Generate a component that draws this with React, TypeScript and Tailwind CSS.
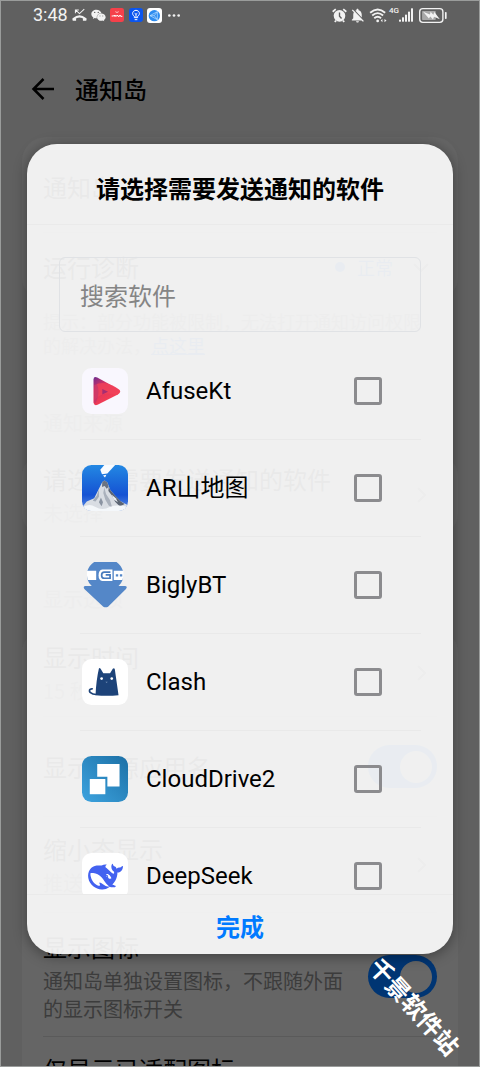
import { useState, type ReactNode } from 'react'
import { FaWeixin } from 'react-icons/fa'
import { MdNotificationsOff } from 'react-icons/md'

type AppEntry = {
  name: string
  icon: ReactNode
}

const apps: AppEntry[] = [
  { name: 'AfuseKt', icon: <AfuseIcon /> },
  { name: 'AR山地图', icon: <MountainIcon /> },
  { name: 'BiglyBT', icon: <BiglyIcon /> },
  { name: 'Clash', icon: <ClashIcon /> },
  { name: 'CloudDrive2', icon: <CloudDriveIcon /> },
  { name: 'DeepSeek', icon: <DeepSeekIcon /> },
]

export default function App() {
  return (
    <div className="relative h-screen overflow-hidden border border-[#9a9c9b] bg-[#606060] font-['Noto_Sans_CJK_SC',sans-serif] text-black">
      <StatusBar />
      <SettingsPage />
      <AppPickerDialog />
      <div className="absolute right-1 bottom-12 rotate-48 text-2xl leading-6 font-bold text-white">
        千景软件站
      </div>
    </div>
  )
}

const StatusBar = () => {
  return (
    <div className="flex h-7 items-center justify-between pr-8 pl-8 text-[#f2f2f2]">
      <div className="flex items-center gap-1">
        <span className="font-['Roboto',sans-serif] text-lg">3:48</span>
        <MissedCallIcon />
        <FaWeixin size={15} />
        <svg viewBox="0 0 42 42" className="h-3.5 w-3.5">
          <rect width="42" height="42" rx="7" fill="#f5404a" />
          <path d="M16 11q5 5 10 0" stroke="#fff" strokeWidth="2" fill="none" />
          <path
            d="M5 24h6l2-3 2 5 2-4 2 3 3-4 2 4h4l2-4 2 4h5"
            stroke="#fff"
            strokeWidth="3"
            fill="none"
          />
        </svg>
        <svg viewBox="0 0 42 42" className="ml-px h-3.5 w-3.5">
          <rect width="42" height="42" rx="9" fill="#0a55f0" />
          <path
            d="M16 29v-4c-10-7-4-18 5-18s15 11 5 18v4zM17 35h8M21 28v-9l-4-3M21 19l4-3"
            stroke="#fff"
            strokeWidth="3"
            fill="none"
          />
        </svg>
        <svg viewBox="0 0 45 45" className="h-[15px] w-[15px]">
          <rect width="45" height="45" rx="9" fill="#fff" />
          <circle cx="22" cy="23" r="17" fill="#2d8cf0" />
          <path
            d="M9 23 31 11v24zM31 11 22 23l9 12M9 23h13"
            stroke="#c4e4ff"
            strokeWidth="2"
            fill="none"
          />
        </svg>
        <svg viewBox="0 0 36 8" className="ml-0.5 h-[3px] w-3" fill="currentColor">
          <circle cx="4" cy="4" r="4" />
          <circle cx="18" cy="4" r="4" />
          <circle cx="32" cy="4" r="4" />
        </svg>
      </div>
      <div className="flex items-center gap-0.5">
        <svg viewBox="0 0 44 44" className="h-[15px] w-[15px]">
          <circle cx="22" cy="23" r="17" fill="currentColor" />
          <path d="M2 11 11 3M42 11 33 3M8 41l4-4M36 41l-4-4" stroke="currentColor" strokeWidth="5" />
          <path d="M22 13v11l6 7" stroke="#606060" strokeWidth="4" fill="none" />
        </svg>
        <MdNotificationsOff size={17} />
        <svg viewBox="0 0 52 44" className="ml-px h-[15px] w-[18px]" fill="none">
          <path
            d="M3 14q22-19 44 0M9 22q16-14 32 0M15 30q10-9 20 0"
            stroke="currentColor"
            strokeWidth="5.500"
          />
          <circle cx="25" cy="38" r="4" fill="currentColor" />
          <path d="m34 37 5-5v10zM51 37l-6-5v10z" fill="currentColor" />
        </svg>
        <span className="mb-2 font-['Roboto',sans-serif] text-[8px] leading-none font-medium">4G</span>
        <svg viewBox="0 0 42 40" className="-ml-0.5 h-[14px] w-[14px]" fill="currentColor">
          <rect y="34" width="6" height="6" />
          <rect x="9" y="27" width="6" height="13" />
          <rect x="18" y="19" width="6" height="21" />
          <rect x="27" y="10" width="6" height="30" />
          <rect x="36" width="6" height="40" />
        </svg>
        <svg viewBox="0 0 82 44" className="ml-1 h-[15px] w-7">
          <rect x="2" y="2" width="68" height="40" rx="9" fill="none" stroke="currentColor" strokeWidth="4" />
          <rect x="9" y="9" width="40" height="26" rx="2" fill="#a8a8a8" />
          <path d="m12 11 20 8 2-8 8 9 3-8 16 21-17-7-3 8-8-9-4 6z" fill="currentColor" />
          <rect x="76" y="12" width="5" height="20" rx="2" fill="currentColor" />
        </svg>
      </div>
    </div>
  )
}

const MissedCallIcon = () => (
  <svg viewBox="0 0 44 40" className="h-3.5 w-[15px]" fill="none" stroke="currentColor">
    <path d="m10 5 12 11L36 3M10 15V5h10" strokeWidth="3" />
    <path d="M5 35v-4q17-14 34 0v4" strokeWidth="6" />
    <path d="M2 33h10M32 33h10" strokeWidth="7" />
  </svg>
)

const SettingsPage = () => {
  return (
    <main>
      <header className="mt-10 flex h-10 items-center gap-5 pl-[30px]">
        <button type="button" aria-label="返回">
          <svg
            viewBox="0 0 24 24"
            className="h-6 w-6"
            fill="none"
            stroke="currentColor"
            strokeWidth="2.5"
          >
            <path d="M23 12H3M12.500 2 2.500 12l10 10" />
          </svg>
        </button>
        <h1 className="text-2xl font-medium">通知岛</h1>
      </header>

      <Card className="mt-7">
        <SettingRow title="通知岛" className="min-h-24 pt-1" />
        <SettingRow title="运行诊断" className="min-h-17">
          <span className="flex items-center gap-3 text-lg text-[#003573]">
            <span className="h-2.5 w-2.5 rounded-full bg-[#003573]" />
            正常
            <Chevron className="ml-2 rotate-90" />
          </span>
        </SettingRow>
      </Card>
      <p className="mx-[42px] mt-2 text-lg leading-6 text-[#3c3c3c]">
        提示：部分功能被限制，无法打开通知访问权限的解决办法，
        <a href="#help" className="text-[#003573] underline">
          点这里
        </a>
      </p>

      <SectionTitle className="mt-13">通知来源</SectionTitle>
      <Card className="mt-4">
        <SettingRow title="请选择需要发送通知的软件" description="未选择" className="min-h-21">
          <Chevron />
        </SettingRow>
      </Card>

      <SectionTitle className="mt-12">显示选项</SectionTitle>
      <Card className="mt-4">
        <SettingRow title="显示时间" description="15 秒" className="min-h-22">
          <Chevron />
        </SettingRow>
        <SettingRow title="显示来源应用名" className="min-h-25">
          <Switch label="显示来源应用名" />
        </SettingRow>
        <SettingRow title="缩小态显示" description="推送图标" className="min-h-24">
          <Chevron />
        </SettingRow>
        <SettingRow
          title="显示图标"
          description="通知岛单独设置图标，不跟随外面的显示图标开关"
          className="min-h-31 pt-1"
        >
          <Switch label="显示图标" />
        </SettingRow>
        <SettingRow title="仅显示已适配图标" className="min-h-16" />
      </Card>
    </main>
  )
}

type BlockProps = {
  className?: string
  children?: ReactNode
}

const Card = ({ className = '', children }: BlockProps) => (
  <section
    className={`mx-[21px] divide-y divide-[#5a5a5a] rounded-3xl bg-[#656565] px-[21px] ${className}`}
  >
    {children}
  </section>
)

const SectionTitle = ({ className = '', children }: BlockProps) => (
  <h2 className={`mx-[42px] text-xl text-[#3c3c3c] ${className}`}>{children}</h2>
)

type SettingRowProps = BlockProps & {
  title: string
  description?: string
}

const SettingRow = ({ title, description, className = '', children }: SettingRowProps) => (
  <div className={`flex items-center justify-between gap-6 ${className}`}>
    <div>
      <h3 className="text-2xl">{title}</h3>
      {description && <p className="mt-1 text-xl text-[#3c3c3c]">{description}</p>}
    </div>
    {children}
  </div>
)

const Chevron = ({ className = '' }: { className?: string }) => (
  <svg
    viewBox="0 0 16 16"
    className={`mr-2 h-4 w-4 shrink-0 ${className}`}
    fill="none"
    stroke="#3c3c3c"
    strokeWidth="2"
  >
    <path d="m5 1 7 7-7 7" />
  </svg>
)

const Switch = ({ label }: { label: string }) => {
  const [enabled, setEnabled] = useState(true)

  return (
    <input
      type="checkbox"
      role="switch"
      aria-label={label}
      checked={enabled}
      onChange={(e) => setEnabled(e.target.checked)}
      className="flex h-[43px] w-[69px] shrink-0 appearance-none items-center rounded-full bg-[#4f4f4f] px-[5px] before:h-8 before:w-8 before:rounded-full before:bg-[#676767] checked:justify-end checked:bg-[#003573]"
    />
  )
}

const AppPickerDialog = () => {
  const [search, setSearch] = useState('')
  const [selected, setSelected] = useState<string[]>([])

  const visibleApps = apps.filter((app) => app.name.toLowerCase().includes(search.toLowerCase()))

  const toggleApp = (name: string) => {
    setSelected((prev) =>
      prev.includes(name) ? prev.filter((item) => item !== name) : [...prev, name]
    )
  }

  return (
    <div
      role="dialog"
      aria-labelledby="picker-title"
      className="absolute inset-x-[26px] top-[143px] bottom-28 flex flex-col overflow-hidden rounded-[30px] bg-[#fbfbfb]/93 shadow-[0_2px_14px_rgba(0,0,0,0.4)]"
    >
      <h2
        id="picker-title"
        className="border-b border-[#eaeaea] pt-7 pb-5 text-center text-2xl font-bold"
      >
        请选择需要发送通知的软件
      </h2>
      <input
        type="text"
        aria-label="搜索软件"
        placeholder="搜索软件"
        value={search}
        onChange={(e) => setSearch(e.target.value)}
        className="mx-8 mt-8 h-[75px] shrink-0 rounded-md border border-[#e0e2e5] px-5 text-2xl placeholder:text-[#858585]"
      />
      <ul className="mt-[11px] min-h-0 flex-1 divide-y divide-[#e9e9e9] overflow-y-auto pr-8 pl-[53px] [scrollbar-width:none]">
        {visibleApps.map((app) => (
          <li key={app.name}>
            <label className="flex h-24 items-center gap-[18px] pr-[39px] pl-0.5">
              {app.icon}
              <span className="flex-1 font-['Roboto','Noto_Sans_CJK_SC',sans-serif] text-2xl">
                {app.name}
              </span>
              <input
                type="checkbox"
                checked={selected.includes(app.name)}
                onChange={() => toggleApp(app.name)}
                className="h-7 w-7 appearance-none rounded-[3px] border-3 border-[#8b8b8e] checked:bg-[#007aff]"
              />
            </label>
          </li>
        ))}
      </ul>
      <button
        type="button"
        className="border-t border-[#eaeaea] pt-[15px] pb-3 text-2xl font-bold text-[#007aff]"
      >
        完成
      </button>
    </div>
  )
}

function AfuseIcon() {
  return (
    <svg viewBox="0 0 136 136" className="h-[46px] w-[46px]">
      <defs>
        <linearGradient id="afuse" x1="0" y1="0" x2="0.6" y2="1">
          <stop offset="0" stopColor="#6a2c91" />
          <stop offset="0.35" stopColor="#d83260" />
          <stop offset="1" stopColor="#fb4150" />
        </linearGradient>
      </defs>
      <rect width="136" height="136" rx="28" fill="#f9f7fe" />
      <path
        d="M34 34q0-10 11-6l61 33q14 8 0 17l-60 31q-10 4-12-6z"
        fill="url(#afuse)"
      />
      <path d="M37 50q30-14 64 8l12 11-10 11Q62 66 36 95z" fill="#f2435a" opacity="0.75" />
      <path d="M37 36q22 28 3 68l-5-3z" fill="#8d2d84" opacity="0.3" />
      <path d="m60 62 17 8-17 8z" fill="#a52d72" />
    </svg>
  )
}

function MountainIcon() {
  return (
    <svg viewBox="0 0 136 136" className="h-[46px] w-[46px]">
      <defs>
        <linearGradient id="sky" x1="0" y1="0" x2="0" y2="1">
          <stop offset="0" stopColor="#2388e3" />
          <stop offset="0.65" stopColor="#1552d3" />
          <stop offset="1" stopColor="#5f8fe4" />
        </linearGradient>
        <clipPath id="skyClip">
          <rect width="136" height="136" rx="28" />
        </clipPath>
      </defs>
      <g clipPath="url(#skyClip)">
        <rect width="136" height="136" fill="url(#sky)" />
        <path d="M54 14 66 0h32L75 25l-16 2z" fill="#f8fbff" />
        <path d="m62 31 10-2-4 8z" fill="#fff" />
        <path
          d="M0 126 14 108l22-10 14-28 10-20 7-4 8 6 9 23 16 18 14 14 22 12v17H0z"
          fill="#d9dde3"
        />
        <path d="m60 50 7-4 8 6 4 12-6 6-6-8-8 3z" fill="#6b7482" />
        <path d="m79 64 5 11 16 18 14 14 12 8-14 8-14-14-9-18-11-14z" fill="#5b6473" />
        <path d="m66 66 5 20 12 18 6 22-10-6-10-17-6-20z" fill="#aab1bc" />
        <path d="m50 72-6 18-12 16 8 2 10-14z" fill="#a3abb7" />
        <path d="m56 96-6 14 8 12 4-12z" fill="#8b94a2" />
        <path d="m88 88 6 14 12 8-6-12z" fill="#eef1f4" />
        <path d="M0 126q20-14 40-2t42 0q22-8 54 0v12H0z" fill="#f4f7fa" />
      </g>
    </svg>
  )
}

function BiglyIcon() {
  return (
    <svg viewBox="0 0 136 136" className="h-[46px] w-[46px]">
      <path
        d="M36 0h66q13 9 19 26v25q-5 13-13 20h19q9 1 3 9L77 132q-7 4-14 0L7 80q-5-8 3-9h19q-9-7-13-20V26Q22 9 36 0z"
        fill="#5487c8"
      />
      <path d="M15 26h27v27H17q-4-13-2-27z" fill="#fff" />
      <path d="M60 22h30v34H60q-11-2-11-17t11-17z" fill="#fff" />
      <path d="M84 30H66q-8 0-8 9t8 9h17V38H70" fill="none" stroke="#467abd" strokeWidth="5" />
      <path d="M94 26h28q2 13-2 27H94z" fill="#fff" />
      <path d="M100 36h7v7h-7zM112 36h7v7h-7z" fill="#5487c8" />
    </svg>
  )
}

function ClashIcon() {
  return (
    <svg viewBox="0 0 136 136" className="h-[46px] w-[46px]">
      <rect width="136" height="136" rx="28" fill="#fff" />
      <path
        d="M50 28q2-3 5 1l8 13h20l8-13q4-4 6 1l11 77q-35 4-68 0 2-45 10-79z"
        fill="#1d4379"
      />
      <path d="M42 105c-15 0-24-9-18-15 4-3 8-1 8-1" stroke="#1d4379" strokeWidth="5" fill="none" />
      <circle cx="58" cy="58" r="4" fill="#fff" />
      <circle cx="88" cy="58" r="4" fill="#fff" />
      <path d="M69 67h7l-3 4z" fill="#7590b5" />
    </svg>
  )
}

function CloudDriveIcon() {
  return (
    <svg viewBox="0 0 136 136" className="h-[46px] w-[46px]">
      <defs>
        <linearGradient id="drive" x1="1" y1="0" x2="0" y2="1">
          <stop offset="0" stopColor="#1c70a6" />
          <stop offset="1" stopColor="#3da3df" />
        </linearGradient>
      </defs>
      <rect width="136" height="136" rx="28" fill="url(#drive)" />
      <path d="M45 24h66v66H75V61H45z" fill="#fff" />
      <path d="M23 68h46v45H23z" fill="#fff" />
    </svg>
  )
}

function DeepSeekIcon() {
  return (
    <svg viewBox="0 0 136 136" className="h-[46px] w-[46px]">
      <rect width="136" height="136" rx="28" fill="#fff" />
      <path
        transform="translate(18 19) scale(4.300)"
        fill="#4362f0"
        d="M23.748 4.482c-.254-.124-.364.113-.512.234-.051.039-.094.09-.137.136-.372.397-.806.657-1.373.626-.829-.046-1.537.214-2.163.848-.133-.782-.575-1.248-1.247-1.548-.352-.156-.708-.311-.955-.65-.172-.241-.219-.51-.305-.774-.055-.16-.11-.323-.293-.35-.2-.031-.278.136-.356.276-.313.572-.434 1.202-.422 1.84.027 1.436.633 2.58 1.838 3.393.137.093.172.187.129.323-.082.28-.18.552-.266.833-.055.179-.137.217-.329.14a5.526 5.526 0 01-1.736-1.18c-.857-.828-1.631-1.742-2.597-2.458a11.365 11.365 0 00-.689-.471c-.985-.957.13-1.743.388-1.836.27-.098.093-.432-.779-.428-.872.004-1.67.295-2.687.684a3.055 3.055 0 01-.465.137 9.597 9.597 0 00-2.883-.102c-1.885.21-3.39 1.102-4.497 2.623C.082 8.606-.231 10.684.152 12.85c.403 2.284 1.569 4.175 3.36 5.653 1.858 1.533 3.997 2.284 6.438 2.14 1.482-.085 3.133-.284 4.994-1.86.47.234.962.327 1.78.397.63.059 1.236-.03 1.705-.128.735-.156.684-.837.419-.961-2.155-1.004-1.682-.595-2.113-.926 1.096-1.296 2.746-2.642 3.392-7.003.05-.347.007-.565 0-.845-.004-.17.035-.237.23-.256a4.173 4.173 0 001.545-.475c1.396-.763 1.96-2.015 2.093-3.517.02-.23-.004-.467-.247-.588zM11.581 18c-2.089-1.642-3.102-2.183-3.52-2.16-.392.024-.321.471-.235.763.09.288.207.486.371.739.114.167.192.416-.113.603-.673.416-1.842-.14-1.897-.167-1.361-.802-2.5-1.86-3.301-3.307-.774-1.393-1.224-2.887-1.298-4.482-.02-.386.093-.522.477-.592a4.696 4.696 0 011.529-.039c2.132.312 3.946 1.265 5.468 2.774.868.86 1.525 1.887 2.202 2.891.72 1.066 1.494 2.082 2.48 2.914.348.292.625.514.891.677-.802.09-2.14.11-3.054-.614zm1-6.44a.306.306 0 01.415-.287.302.302 0 01.2.288.306.306 0 01-.31.307.303.303 0 01-.304-.308zm3.11 1.596c-.2.081-.399.151-.59.16a1.245 1.245 0 01-.798-.254c-.274-.23-.47-.358-.552-.758a1.73 1.73 0 01.016-.588c.07-.327-.008-.537-.239-.727-.187-.156-.426-.199-.688-.199a.559.559 0 01-.254-.078c-.11-.054-.2-.19-.114-.358.028-.054.16-.186.192-.21.356-.202.767-.136 1.146.016.352.144.618.408 1.001.782.391.451.462.576.685.914.176.265.336.537.445.848.067.195-.019.354-.25.452z"
      />
    </svg>
  )
}
